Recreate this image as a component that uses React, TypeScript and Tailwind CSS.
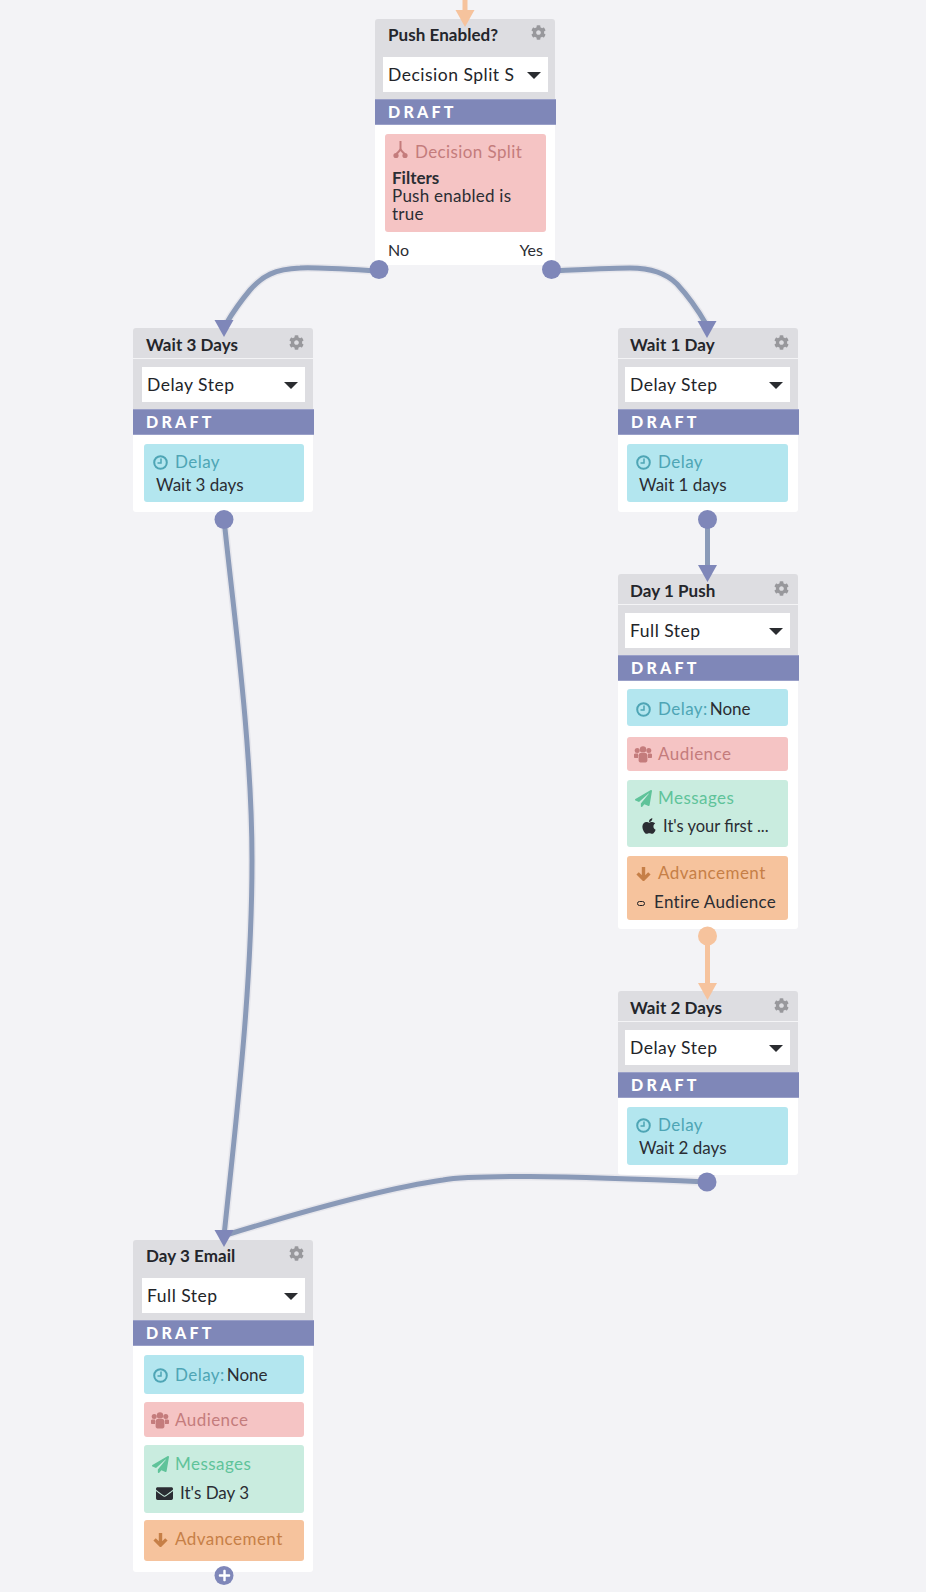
import React from "react";
import { FaCog, FaPaperPlane, FaApple, FaEnvelope, FaPlus } from "react-icons/fa";

const font = { fontFamily: '"Lato", "Noto Sans", sans-serif' };

function Split() {
  return (
    <svg width="15" height="18" viewBox="0 0 15 18" className="shrink-0">
      <path d="M7.5 0v7.5M7.5 7.5C7.5 10 5 10.5 3.5 13M7.5 7.5C7.5 10 10 10.5 11.5 13" fill="none" stroke="#c47c7c" strokeWidth="2" />
      <circle cx="3" cy="14.5" r="2.6" fill="#c47c7c" />
      <circle cx="12" cy="14.5" r="2.6" fill="#c47c7c" />
    </svg>
  );
}

function Clock() {
  return (
    <svg width="15" height="15" viewBox="0 0 15 15">
      <circle cx="7.5" cy="7.5" r="6.3" fill="none" stroke="#4ea5b5" strokeWidth="2" />
      <path d="M8 3.5V8H4.5" fill="none" stroke="#4ea5b5" strokeWidth="1.5" />
    </svg>
  );
}

function People() {
  return (
    <svg width="18" height="17" viewBox="0 0 18 17">
      <g fill="#c47c7c">
        <circle cx="3.2" cy="4.6" r="2.5" />
        <circle cx="14.8" cy="4.6" r="2.5" />
        <circle cx="9" cy="3.4" r="3.2" />
        <path d="M0 8.6C0 7.6 1 7.4 2.5 7.4H4V12H0.8C0.3 12 0 11.7 0 11.2zM18 8.6C18 7.6 17 7.4 15.5 7.4H14V12H17.2C17.7 12 18 11.7 18 11.2z" />
        <path d="M4.6 9.2C4.6 7.6 6 7 7.2 7H10.8C12 7 13.4 7.6 13.4 9.2V14.6C13.4 15.8 12.6 16.4 11.6 16.4H6.4C5.4 16.4 4.6 15.8 4.6 14.6z" />
      </g>
    </svg>
  );
}

function ArrowDown() {
  return (
    <svg width="15" height="15" viewBox="0 0 15 15">
      <path d="M7.5 1V13M1.6 7.4L7.5 13.2L13.4 7.4" fill="none" stroke="#c67f47" strokeWidth="3.4" />
    </svg>
  );
}

function Head({ icon, label, color, rest }: { icon: React.ReactNode; label: string; color: string; rest?: string }) {
  return (
    <div className="flex h-5 items-center">
      <span className="flex w-[22px] shrink-0 items-center justify-center">{icon}</span>
      <span className={"ml-[4px] text-[17px] leading-5 tracking-[0.45px] whitespace-nowrap " + color}>{label}</span>
      {rest ? <span className="ml-[2px] text-[17px] leading-5 text-[#2b2d33]">{rest}</span> : null}
    </div>
  );
}

const greenIcon = <FaPaperPlane size={17} color="#5fc39a" />;

function Card({
  left, top, title, step, line, selectPad, titlePad, bodyPad, bodyGap, children, bottom,
}: {
  left: string; top: string; title: string; step: string; line?: boolean; selectPad: string; titlePad: string; bodyPad: string; bodyGap?: string; children: React.ReactNode; bottom: string;
}) {
  return (
    <div className={"absolute w-[180px] " + left + " " + top}>
      <div className="relative rounded-t-[3px] bg-[#dddde1]">
        <div className={"flex items-start justify-between pr-[9px] " + titlePad + " " + (line ? "h-[31px] border-b border-[#f4f4f6] pt-[6px]" : "h-[30px] pt-[5px]")}>
          <span className="text-[17px] leading-[22px] font-bold tracking-[0.05px] whitespace-nowrap text-[#24262b]">{title}</span>
          <FaCog size={15} color="#98989c" className="mt-[1px] shrink-0" />
        </div>
        <div className={"pb-[7px] pt-[8px] " + selectPad}>
          <div className="flex h-[35px] items-center justify-between bg-white pl-[5px] pr-[7px]">
            <span className="text-[17.5px] leading-6 tracking-[0.5px] whitespace-nowrap text-[#222429]">{step}</span>
            <svg width="14" height="7" viewBox="0 0 14 7" className="mt-[2px] shrink-0"><path d="M0 0h14L7 7z" fill="#2a2c30" /></svg>
          </div>
        </div>
      </div>
      <div className="h-[26px] w-[181px] border-y border-[#9aa0c8] bg-[#7f87b8] pl-[13px] text-[16px] leading-[24px] font-black tracking-[3.2px] text-white">DRAFT</div>
      <div className={"flex flex-col rounded-b-[3px] bg-white " + bodyPad + " " + (bodyGap ?? "gap-[9px]") + " " + bottom}>{children}</div>
    </div>
  );
}

function Box({ className, children }: { className: string; children: React.ReactNode }) {
  return <div className={"rounded-[3px] " + className}>{children}</div>;
}

function DelayBox({ days }: { days: string }) {
  return (
    <Box className="h-[58px] bg-[#b3e6ef] pl-[5px] pt-[8px]">
      <Head icon={<Clock />} label="Delay" color="text-[#4ea5b5]" />
      <div className="mt-[2px] pl-[7px] text-[17px] leading-[22px] text-[#2b2d33]">{days}</div>
    </Box>
  );
}

function Edge({ d, color = "#8a9ab8", halo = true }: { d: string; color?: string; halo?: boolean }) {
  return (
    <>
      {halo ? <path d={d} fill="none" stroke="#e6e6ec" strokeWidth="8" strokeLinecap="round" /> : null}
      <path d={d} fill="none" stroke={color} strokeWidth="5" />
    </>
  );
}

function Arrow({ x, y, color = "#7f87b9" }: { x: number; y: number; color?: string }) {
  return <path d={`M${x - 9.5} ${y - 17}h19L${x} ${y}z`} fill={color} />;
}

const leftPads = { selectPad: "pl-[9px] pr-[8px]", titlePad: "pl-[13px]", bodyPad: "pl-[11px] pr-[9px]" };
const rightPads = { selectPad: "pl-[7px] pr-[8px]", titlePad: "pl-[12px]", bodyPad: "pl-[9px] pr-[10px]" };

export default function App() {
  return (
    <div className="relative h-[1592px] w-[926px] overflow-hidden bg-[#f3f3f6]" style={font}>
      <Card left="left-[375px]" top="top-[19px]" title="Push Enabled?" step="Decision Split S" selectPad="pl-[8px] pr-[7px]" titlePad="pl-[13px]" bodyPad="pl-[10px] pr-[9px] pt-[9px]" bodyGap="gap-[8px]" bottom="h-[140px]">
        <Box className="h-[98px] bg-[#f5c4c4] pl-[7px] pt-[8px]">
          <div className="flex h-5 items-center">
            <span className="-mt-[4px] ml-[1px] flex"><Split /></span>
            <span className="ml-[7px] text-[17px] leading-5 tracking-[0.4px] text-[#c47c7c]">Decision Split</span>
          </div>
          <div className="mt-[7px] text-[17px] leading-[18px] text-[#2b2d33]">
            <div className="font-bold">Filters</div>
            <div className="tracking-[0.25px]">Push enabled is</div>
            <div className="tracking-[0.25px]">true</div>
          </div>
        </Box>
        <div className="flex justify-between pl-[3px] pr-[3px] text-[16px] leading-5 text-[#2b2d33]">
          <span>No</span>
          <span>Yes</span>
        </div>
      </Card>

      <Card left="left-[133px]" top="top-[328px]" title="Wait 3 Days" step="Delay Step" line {...leftPads} bodyPad="pl-[11px] pr-[9px] pt-[9px]" bottom="h-[77px]">
        <DelayBox days="Wait 3 days" />
      </Card>

      <Card left="left-[618px]" top="top-[328px]" title="Wait 1 Day" step="Delay Step" line {...rightPads} bodyPad="pl-[9px] pr-[10px] pt-[9px]" bottom="h-[77px]">
        <DelayBox days="Wait 1 days" />
      </Card>

      <Card left="left-[618px]" top="top-[574px]" title="Day 1 Push" step="Full Step" line {...rightPads} bodyPad="pl-[9px] pr-[10px] pt-[8px]" bottom="h-[248px]">
        <Box className="h-[37px] bg-[#b3e6ef] pl-[5px] pt-[10px]">
          <Head icon={<Clock />} label="Delay:" color="text-[#4ea5b5]" rest="None" />
        </Box>
        <Box className="mt-[2px] h-[34px] bg-[#f5c4c4] pl-[5px] pt-[7px]">
          <Head icon={<People />} label="Audience" color="text-[#c47c7c]" />
        </Box>
        <Box className="h-[67px] bg-[#c9ecdf] pl-[5px] pt-[8px]">
          <Head icon={greenIcon} label="Messages" color="text-[#5fc39a]" />
          <div className="mt-[8px] flex items-center pl-[8px] text-[16.5px] leading-5 text-[#2b2d33]">
            <FaApple size={18} color="#2b2d33" />
            <span className="ml-[5px] whitespace-nowrap">It's your first ...</span>
          </div>
        </Box>
        <Box className="h-[64px] bg-[#f6c39d] pl-[5px] pt-[7px]">
          <Head icon={<ArrowDown />} label="Advancement" color="text-[#c67f47]" />
          <div className="mt-[9px] flex items-center pl-[5px] text-[17px] leading-5 tracking-[0.3px] text-[#2b2d33]">
            <span className="mt-[3px] h-[5px] w-[8px] rounded-full border-[1.5px] border-[#1f2024]" />
            <span className="ml-[9px] whitespace-nowrap">Entire Audience</span>
          </div>
        </Box>
      </Card>

      <Card left="left-[618px]" top="top-[991px]" title="Wait 2 Days" step="Delay Step" line {...rightPads} bodyPad="pl-[9px] pr-[10px] pt-[9px]" bottom="h-[77px]">
        <DelayBox days="Wait 2 days" />
      </Card>

      <Card left="left-[133px]" top="top-[1240px]" title="Day 3 Email" step="Full Step" {...leftPads} bodyPad="pl-[11px] pr-[9px] pt-[9px]" bodyGap="gap-[8px]" bottom="h-[226px]">
        <Box className="h-[39px] bg-[#b3e6ef] pl-[5px] pt-[10px]">
          <Head icon={<Clock />} label="Delay:" color="text-[#4ea5b5]" rest="None" />
        </Box>
        <Box className="h-[35px] bg-[#f5c4c4] pl-[5px] pt-[8px]">
          <Head icon={<People />} label="Audience" color="text-[#c47c7c]" />
        </Box>
        <Box className="h-[68px] bg-[#c9ecdf] pl-[5px] pt-[9px]">
          <Head icon={greenIcon} label="Messages" color="text-[#5fc39a]" />
          <div className="mt-[9px] flex items-center pl-[7px] text-[17px] leading-5 text-[#2b2d33]">
            <FaEnvelope size={17} color="#2b2d33" />
            <span className="ml-[7px] whitespace-nowrap">It's Day 3</span>
          </div>
        </Box>
        <Box className="-mt-[1px] h-[41px] bg-[#f6c39d] pl-[5px] pt-[9px]">
          <Head icon={<ArrowDown />} label="Advancement" color="text-[#c67f47]" />
        </Box>
      </Card>

      <svg className="absolute left-0 top-0" width="926" height="1592" viewBox="0 0 926 1592">
        <Edge d="M465 0V12" color="#f6c39d" halo={false} />
        <Arrow x={465} y={27} color="#f6c39d" />

        <Edge d="M379 271C345 269 315 267 300 268C275 269 262 276 250 290C240 302 233 312 226 324" />
        <Arrow x={224} y={337} />
        <circle cx="379" cy="269.5" r="9.5" fill="#7f87b9" />

        <Edge d="M552 271C590 269 615 268 630 268C650 268 665 272 677 284C688 296 698 310 706 324" />
        <Arrow x={707} y={338} />
        <circle cx="551.5" cy="269.5" r="9.5" fill="#7f87b9" />

        <Edge d="M224 519C232 600 252 740 252 860C252 990 236 1120 224 1236" />
        <Edge d="M707 1182C640 1179 590 1177 530 1176.5C490 1176.5 460 1177 443 1180C400 1186 340 1200 226 1235" />
        <Arrow x={224} y={1247} />
        <circle cx="224" cy="519.5" r="9.5" fill="#7f87b9" />
        <circle cx="707" cy="1182" r="9.5" fill="#7f87b9" />

        <Edge d="M707.5 519V568" halo={false} />
        <Arrow x={707.5} y={582} />
        <circle cx="707.5" cy="519.5" r="9.5" fill="#7f87b9" />

        <Edge d="M707.5 936V986" color="#f6c39d" halo={false} />
        <Arrow x={707.5} y={1000} color="#f6c39d" />
        <circle cx="707.5" cy="936" r="9.5" fill="#f6c39d" />

        <circle cx="224" cy="1575.5" r="9.5" fill="#7f87b9" />
      </svg>
      <FaPlus size={13} color="#ffffff" className="absolute left-[217.5px] top-[1569px]" />
    </div>
  );
}
